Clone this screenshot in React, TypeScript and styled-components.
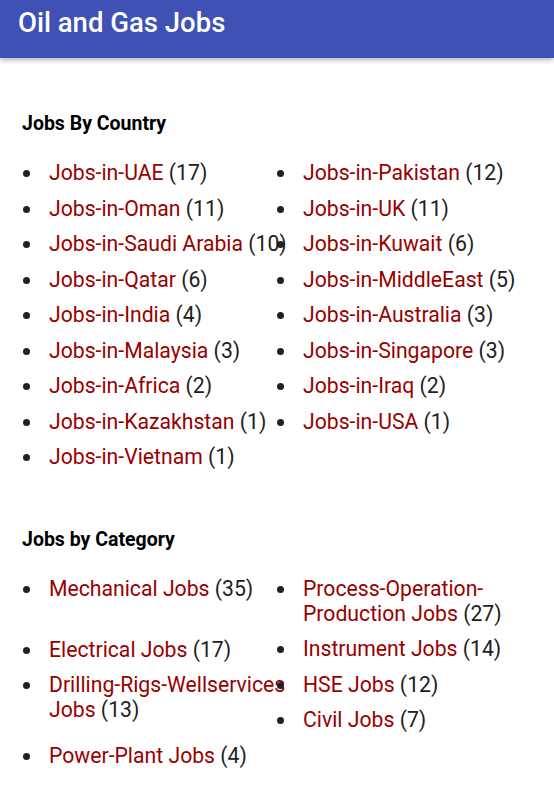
import styled, { createGlobalStyle } from "styled-components";

const GlobalStyle = createGlobalStyle`
    body {
        margin: 0;
        background: #ffffff;
        font-family: Roboto, "Liberation Sans", sans-serif;
        color: #212121;
    }
`;

const TopBar = styled.header`
    height: 58px;
    display: flex;
    align-items: center;
    padding: 0 18px;
    background-color: #3f51b5;
    box-shadow: 0 2px 5px rgba(0, 0, 0, 0.3);
`;

const Title = styled.h1`
    margin: 0 0 14px;
    color: #ffffff;
    font-size: 27.5px;
    font-weight: 500;
`;

const Main = styled.main`
    display: flex;
    flex-direction: column;
    gap: 49px;
    padding: 55px 0 40px 22px;
`;

const Heading = styled.h2`
    margin: 0 0 26px;
    font-size: 19.5px;
    line-height: 21px;
    font-weight: 700;
    color: #000000;
`;

const Columns = styled.div`
    display: grid;
    grid-template-columns: 254px 1fr;
`;

const List = styled.ul`
    margin: 0;
    padding-left: 21px;
`;

// labels keep their own line breaks and never wrap, as in the original page
const Item = styled.li<{ $extra?: number }>`
    padding-left: 6px;
    font-size: 21.2px;
    line-height: 25px;
    margin-bottom: ${(p) => 10.5 + (p.$extra ?? 0)}px;
    color: #212121;
    white-space: pre;
`;

const JobLink = styled.a`
    color: #990000;
    text-decoration: none;
`;

type Entry = { label: string; count: number; extra?: number };

const countryLeft: Entry[] = [
    { label: "Jobs-in-UAE", count: 17 },
    { label: "Jobs-in-Oman", count: 11 },
    { label: "Jobs-in-Saudi Arabia", count: 10 },
    { label: "Jobs-in-Qatar", count: 6 },
    { label: "Jobs-in-India", count: 4 },
    { label: "Jobs-in-Malaysia", count: 3 },
    { label: "Jobs-in-Africa", count: 2 },
    { label: "Jobs-in-Kazakhstan", count: 1 },
    { label: "Jobs-in-Vietnam", count: 1 },
];

const countryRight: Entry[] = [
    { label: "Jobs-in-Pakistan", count: 12 },
    { label: "Jobs-in-UK", count: 11 },
    { label: "Jobs-in-Kuwait", count: 6 },
    { label: "Jobs-in-MiddleEast", count: 5 },
    { label: "Jobs-in-Australia", count: 3 },
    { label: "Jobs-in-Singapore", count: 3 },
    { label: "Jobs-in-Iraq", count: 2 },
    { label: "Jobs-in-USA", count: 1 },
];

const categoryLeft: Entry[] = [
    { label: "Mechanical Jobs", count: 35, extra: 25.5 },
    { label: "Electrical Jobs", count: 17 },
    { label: "Drilling-Rigs-Wellservices\nJobs", count: 13, extra: 10.5 },
    { label: "Power-Plant Jobs", count: 4 },
];

const categoryRight: Entry[] = [
    { label: "Process-Operation-\nProduction Jobs", count: 27 },
    { label: "Instrument Jobs", count: 14 },
    { label: "HSE Jobs", count: 12 },
    { label: "Civil Jobs", count: 7 },
];

function JobList(props: { entries: Entry[] }) {
    return (
        <List>
            {props.entries.map((e) => (
                <Item key={e.label} $extra={e.extra}>
                    <JobLink href="#">{e.label}</JobLink> ({e.count})
                </Item>
            ))}
        </List>
    );
}

export default function App() {
    return (
        <>
            <GlobalStyle />
            <TopBar>
                <Title>Oil and Gas Jobs</Title>
            </TopBar>
            <Main>
                <section>
                    <Heading>Jobs By Country</Heading>
                    <Columns>
                        <JobList entries={countryLeft} />
                        <JobList entries={countryRight} />
                    </Columns>
                </section>
                <section>
                    <Heading>Jobs by Category</Heading>
                    <Columns>
                        <JobList entries={categoryLeft} />
                        <JobList entries={categoryRight} />
                    </Columns>
                </section>
            </Main>
        </>
    );
}
